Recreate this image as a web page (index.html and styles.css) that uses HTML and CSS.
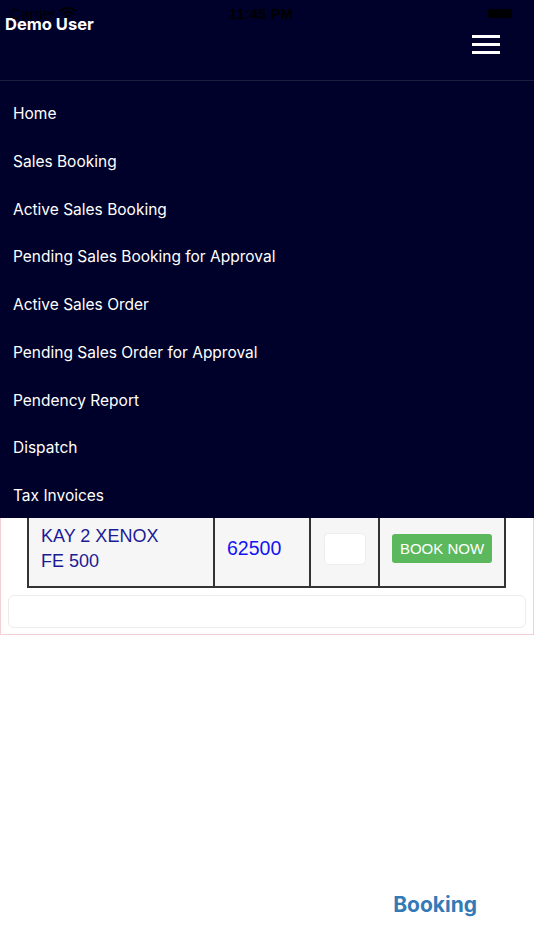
FILE: index.html
```html
<!DOCTYPE html>
<html lang="en">
<head>
  <meta charset="UTF-8">
  <title>Sales Booking</title>
  <link rel="stylesheet" href="styles.css">
</head>
<body>
  <div class="status-bar">
    <span class="carrier">Carrier
      <svg width="18" height="13" viewBox="0 0 18 13"><path d="M1 4.5a11 11 0 0 1 16 0M3.8 7.3a7 7 0 0 1 10.4 0M6.6 10a3 3 0 0 1 4.8 0" fill="none" stroke="currentColor" stroke-width="2"/></svg>
    </span>
    <span class="clock">11:45 PM</span>
    <span class="battery"><span class="battery-fill"></span></span>
  </div>

  <header class="top-bar">
    <h1 class="user-name">Demo User</h1>
    <button class="menu-toggle" aria-label="Menu">
      <span></span><span></span><span></span>
    </button>
  </header>

  <nav class="side-menu">
    <a href="#">Home</a>
    <a href="#">Sales Booking</a>
    <a href="#">Active Sales Booking</a>
    <a href="#">Pending Sales Booking for Approval</a>
    <a href="#">Active Sales Order</a>
    <a href="#">Pending Sales Order for Approval</a>
    <a href="#">Pendency Report</a>
    <a href="#">Dispatch</a>
    <a href="#">Tax Invoices</a>
  </nav>

  <main class="content">
    <div class="booking-panel">
      <table class="product-table">
        <tr>
          <td class="product-name">KAY 2 XENOX<br>FE 500</td>
          <td class="product-price">62500</td>
          <td class="product-qty"><input type="text"></td>
          <td class="product-action"><button class="book-btn">BOOK NOW</button></td>
        </tr>
      </table>
      <div class="remarks-box"></div>
    </div>
  </main>

  <footer class="tab-bar">
    <span class="tab-label">Booking</span>
  </footer>
</body>
</html>
```

FILE: styles.css
```css
* {
  box-sizing: border-box;
}
body {
  margin: 0;
  height: 950px;
  display: flex;
  flex-direction: column;
  font-family: Inter, "Liberation Sans", sans-serif;
  background: #fff;
  position: relative;
}

/* status bar sits over the header */
.status-bar {
  position: absolute;
  top: 0;
  left: 0;
  right: 0;
  height: 26px;
  display: flex;
  align-items: center;
  justify-content: space-between;
  padding: 0 22px 0 10px;
  color: #000;
  font-size: 15px;
  font-family: "Liberation Sans", sans-serif;
}
.carrier {
  display: flex;
  align-items: center;
  gap: 3px;
  width: 110px;
}
.clock {
  font-weight: bold;
}
.battery {
  width: 110px;
  display: flex;
  justify-content: flex-end;
}
.battery-fill {
  width: 24px;
  height: 9px;
  background: #000;
  border-radius: 2px;
}

.top-bar {
  height: 81px;
  background: #00012a;
  border-bottom: 1px solid #1d1e3d;
  display: flex;
  justify-content: space-between;
  align-items: flex-start;
  padding: 0 34px 0 5px;
}
.user-name {
  margin: 14px 0 0;
  font-size: 16.5px;
  font-weight: 700;
  color: #fff;
}
.menu-toggle {
  margin-top: 35px;
  width: 28px;
  padding: 0;
  background: none;
  border: none;
  display: flex;
  flex-direction: column;
  gap: 5.5px;
}
.menu-toggle span {
  display: block;
  height: 2.5px;
  background: #fff;
}

.side-menu {
  position: absolute;
  top: 81px;
  left: 0;
  right: 0;
  background: #00012a;
  padding-top: 7px;
  display: flex;
  flex-direction: column;
  z-index: 2;
}
.side-menu a {
  display: block;
  padding: 15px 13px 10.75px;
  line-height: 22px;
  font-size: 15.5px;
  color: #fff;
  text-decoration: none;
}

.content {
  flex: 1;
}
.booking-panel {
  margin-top: 415px;
  border: 1px solid #f3d0d6;
  padding: 12px 7px 6px;
}
.product-table {
  margin-left: 19px;
  width: 479px;
  border-collapse: collapse;
  font-family: "Liberation Sans", sans-serif;
}
.product-table td {
  border: 2px solid #333;
  background: #f6f6f6;
  height: 77px;
  vertical-align: middle;
}
.product-name {
  width: 186px;
  padding: 0 12px;
  font-size: 18px;
  line-height: 25px;
  color: #1b1b96;
}
.product-price {
  width: 96px;
  padding: 0 12px;
  font-size: 19.5px;
  color: #1414f0;
}
.product-qty {
  width: 69px;
  text-align: center;
}
.product-qty input {
  width: 42px;
  height: 32px;
  border: 1px solid #eee;
  border-radius: 5px;
  background: #fff;
}
.product-action {
  text-align: center;
}
.book-btn {
  background: #5cb85c;
  color: #fff;
  border: none;
  border-radius: 3px;
  padding: 6px 8px;
  font-size: 15px;
  font-family: "Liberation Sans", sans-serif;
}
.remarks-box {
  margin-top: 7px;
  height: 33px;
  border: 1px solid #ececec;
  border-radius: 6px;
}

.tab-bar {
  height: 90px;
  display: flex;
  justify-content: flex-end;
  padding: 32px 57px 0 0;
}
.tab-label {
  font-size: 21px;
  font-weight: 700;
  color: #337ab7;
}
```
